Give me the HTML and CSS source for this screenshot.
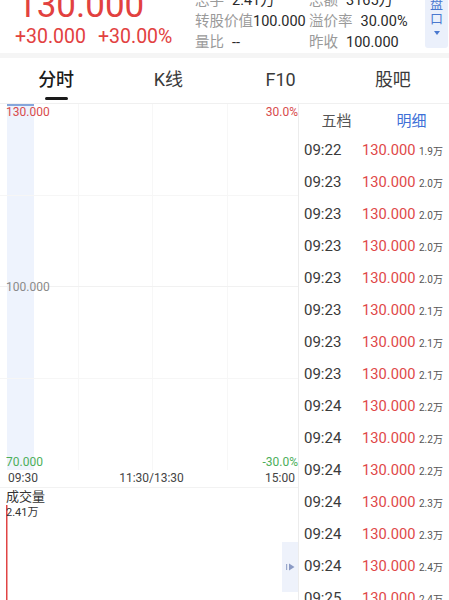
FILE: index.html
```html
<!DOCTYPE html>
<html>
<head>
  <meta charset="utf-8">
  <title>分时</title>
  <link rel="stylesheet" href="styles.css">
</head>
<body>

  <div class="quote">
    <div class="quote-main">
      <div class="price">130.000</div>
      <div class="change"><span>+30.000</span><span>+30.00%</span></div>
    </div>
    <div class="stats">
      <div><span class="label">总手</span><span class="value">2.41万</span></div>
      <div><span class="label">总额</span><span class="value">3165万</span></div>
      <div><span class="label">转股价值</span><span class="value tight">100.000</span></div>
      <div><span class="label">溢价率</span><span class="value">30.00%</span></div>
      <div><span class="label">量比</span><span class="value">--</span></div>
      <div><span class="label">昨收</span><span class="value">100.000</span></div>
    </div>
    <div class="depth-btn"><span>盘</span><span>口</span><i class="caret"></i></div>
  </div>

  <div class="tabs">
    <div class="tab active">分时</div>
    <div class="tab">K线</div>
    <div class="tab">F10</div>
    <div class="tab">股吧</div>
  </div>

  <div class="board">
    <div class="plot">
      <div class="plot-area">
        <div class="scale-row up"><span>130.000</span><span>30.0%</span></div>
        <div class="scale-row mid"><span>100.000</span></div>
        <div class="scale-row down"><span>70.000</span><span>-30.0%</span></div>
      </div>
      <div class="axis"><span>09:30</span><span>11:30/13:30</span><span>15:00</span></div>
      <div class="volume">
        <div class="vol-title">成交量</div>
        <div class="vol-value">2.41万</div>
        <div class="vol-toggle">
          <svg width="9" height="8" viewBox="0 0 9 8">
            <rect x="0" y="1" width="1.2" height="6" fill="#9aa8cc"/>
            <path d="M3 0.5 L8.5 4 L3 7.5 Z" fill="#8a9ac4"/>
          </svg>
        </div>
      </div>
    </div>

    <div class="detail">
      <div class="detail-head"><span>五档</span><span class="on">明细</span></div>
      <div class="trade"><span class="t">09:22</span><span class="p">130.000</span><span class="v">1.9万</span></div>
      <div class="trade"><span class="t">09:23</span><span class="p">130.000</span><span class="v">2.0万</span></div>
      <div class="trade"><span class="t">09:23</span><span class="p">130.000</span><span class="v">2.0万</span></div>
      <div class="trade"><span class="t">09:23</span><span class="p">130.000</span><span class="v">2.0万</span></div>
      <div class="trade"><span class="t">09:23</span><span class="p">130.000</span><span class="v">2.0万</span></div>
      <div class="trade"><span class="t">09:23</span><span class="p">130.000</span><span class="v">2.1万</span></div>
      <div class="trade"><span class="t">09:23</span><span class="p">130.000</span><span class="v">2.1万</span></div>
      <div class="trade"><span class="t">09:23</span><span class="p">130.000</span><span class="v">2.1万</span></div>
      <div class="trade"><span class="t">09:24</span><span class="p">130.000</span><span class="v">2.2万</span></div>
      <div class="trade"><span class="t">09:24</span><span class="p">130.000</span><span class="v">2.2万</span></div>
      <div class="trade"><span class="t">09:24</span><span class="p">130.000</span><span class="v">2.2万</span></div>
      <div class="trade"><span class="t">09:24</span><span class="p">130.000</span><span class="v">2.3万</span></div>
      <div class="trade"><span class="t">09:24</span><span class="p">130.000</span><span class="v">2.3万</span></div>
      <div class="trade"><span class="t">09:24</span><span class="p">130.000</span><span class="v">2.4万</span></div>
      <div class="trade"><span class="t">09:25</span><span class="p">130.000</span><span class="v">2.4万</span></div>
    </div>
  </div>

</body>
</html>
```

FILE: styles.css
```css
html, body {
  margin: 0;
  height: 600px;
  overflow: hidden;
}

body {
  font-family: Roboto, "Noto Sans CJK SC", sans-serif;
  background: #fff;
  color: #333;
}

/* quote header */
.quote {
  display: flex;
  height: 58px;
  box-sizing: border-box;
  border-bottom: 5px solid #f5f5f5;
  overflow: hidden;
}

.quote-main {
  flex: 0 0 195px;
  box-sizing: border-box;
  padding-left: 15px;
  color: #e2413f;
}

.price {
  font-size: 35px;
  line-height: 35px;
  margin: -12px 0 0 2px;
}

.change {
  font-size: 19.5px;
  line-height: 20px;
  margin-top: 4px;
  white-space: nowrap;
}

.change span + span {
  margin-left: 12px;
}

.stats {
  display: grid;
  grid-template-columns: 114px auto;
  margin-top: -10px;
  font-size: 14.5px;
  line-height: 21px;
  white-space: nowrap;
}

.label {
  color: #9a9a9a;
}

.value {
  color: #2a2a2a;
  margin-left: 8px;
}

.value.tight {
  margin-left: 0;
}

.depth-btn {
  margin: -4px 1px 0 auto;
  width: 23px;
  height: 52px;
  background: #ebf0fb;
  border-radius: 0 0 3px 3px;
  display: flex;
  flex-direction: column;
  align-items: center;
  color: #4a78cf;
  font-size: 13px;
  line-height: 15px;
}

.caret {
  margin-top: 5px;
  width: 0;
  height: 0;
  border-left: 3px solid transparent;
  border-right: 3px solid transparent;
  border-top: 4px solid #4a78cf;
}

/* tabs */
.tabs {
  display: grid;
  grid-template-columns: repeat(4, 1fr);
  height: 45px;
}

.tab {
  text-align: center;
  font-size: 18px;
  line-height: 24px;
  padding-top: 10px;
  color: #3a3a3a;
}

.tab.active {
  color: #1a1a1a;
  font-weight: 500;
}

.tab.active::after {
  content: "";
  display: block;
  width: 23px;
  height: 3px;
  border-radius: 2px;
  background: #1a1a1a;
  margin: 5px auto 0;
}

/* chart + detail */
.board {
  display: flex;
  border-top: 1px solid #f0f0f0;
  height: 496px;
}

.plot {
  width: 298px;
  flex: none;
  border-right: 1px solid #ececec;
}

.plot-area {
  height: 366px;
  box-sizing: border-box;
  padding: 1px 0 1px 6px;
  display: flex;
  flex-direction: column;
  justify-content: space-between;
  font-size: 12px;
  line-height: 14px;
  background:
    linear-gradient(#86a6db, #86a6db) no-repeat 7px 0 / 27px 2px,
    linear-gradient(#f6f6f6, #f6f6f6) no-repeat 0 91px / 100% 1px,
    linear-gradient(#f1f1f1, #f1f1f1) no-repeat 0 182px / 100% 1px,
    linear-gradient(#f6f6f6, #f6f6f6) no-repeat 0 274px / 100% 1px,
    linear-gradient(#f7f7f7, #f7f7f7) no-repeat 78px 0 / 1px 100%,
    linear-gradient(#f7f7f7, #f7f7f7) no-repeat 152px 0 / 1px 100%,
    linear-gradient(#f7f7f7, #f7f7f7) no-repeat 227px 0 / 1px 100%,
    linear-gradient(#eef3fd, #eef3fd) no-repeat 7px 0 / 27px 100%;
}

.scale-row {
  display: flex;
  justify-content: space-between;
}

.scale-row.up {
  color: #d84c4c;
}

.scale-row.mid {
  color: #8a8a8a;
}

.scale-row.down {
  color: #4cae5a;
}

.axis {
  display: flex;
  justify-content: space-between;
  padding: 0 3px 0 8px;
  height: 17px;
  line-height: 17px;
  font-size: 12px;
  color: #444;
  border-bottom: 1px solid #f2f2f2;
}

.volume {
  height: 112px;
  padding-left: 6px;
  display: flex;
  flex-direction: column;
  background: linear-gradient(#e04545, #e04545) no-repeat 6px 17px / 1.5px 100%;
}

.vol-title {
  font-size: 13px;
  line-height: 18px;
  color: #333;
}

.vol-value {
  font-size: 11px;
  line-height: 14px;
  color: #333;
}

.vol-toggle {
  align-self: flex-end;
  margin-top: 22px;
  width: 16px;
  height: 50px;
  background: #eef2fb;
  display: flex;
  align-items: center;
  justify-content: center;
}

.detail {
  flex: 1;
}

.detail-head {
  display: flex;
  height: 30px;
  align-items: center;
  font-size: 15px;
}

.detail-head span {
  flex: 1;
  text-align: center;
  color: #555;
}

.detail-head .on {
  color: #3d6fd7;
}

.trade {
  display: grid;
  grid-template-columns: 58px 57px auto;
  align-items: baseline;
  height: 32px;
  line-height: 32px;
  padding-left: 5px;
  white-space: nowrap;
}

.trade .t {
  font-size: 15px;
  color: #3a3a3a;
}

.trade .p {
  font-size: 14.7px;
  color: #e04848;
}

.trade .v {
  font-size: 10px;
  color: #555;
}
```
